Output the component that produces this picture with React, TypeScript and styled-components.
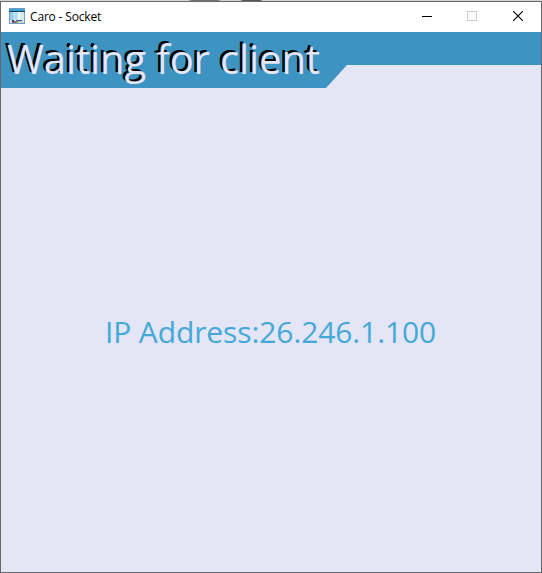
import React from 'react';
import styled, { createGlobalStyle } from 'styled-components';

const GlobalStyle = createGlobalStyle`
  *, *::before, *::after { box-sizing: border-box; }
  body { margin: 0; background: #d4d6d3; overflow: hidden; }
`;

const Desktop = styled.div`
  height: 573px;
  width: 542px;
  padding-top: 1px;
  background: linear-gradient(90deg, #d6d8d5 0 188px, #77716b 192px 218px, #d0d2cf 221px 240px, #555 243px 260px, #d4d6d3 263px);
`;

const Window = styled.main`
  display: flex;
  flex-direction: column;
  width: 542px;
  height: 572px;
  border: 1px solid #68696c;
  background: #e4e5f5;
`;

const TitleBar = styled.header`
  display: flex;
  align-items: flex-start;
  flex: none;
  height: 30px;
  padding-left: 8px;
  background: #fff;
`;

const Caption = styled.span`
  flex: 1;
  margin: 7px 0 0 5px;
  color: #000;
  font: 12px/16px 'Open Sans', sans-serif;
  letter-spacing: -0.17px;
  white-space: nowrap;
`;

const CaptionButton = styled.button<{ $disabled?: boolean }>`
  display: grid;
  place-items: center;
  width: 46px;
  height: 28px;
  padding: 0;
  border: 0;
  background: none;
  color: ${({ $disabled }) => ($disabled ? '#c8c8c8' : '#000')};
`;

const Controls = styled.div`
  display: flex;
`;

const Banner = styled.div`
  flex: none;
  height: 56px;
  padding-left: 6px;
  background: #3d94c3;
  clip-path: polygon(0 0, 100% 0, 100% 33px, 346px 33px, 325px 100%, 0 100%);
`;

const Heading = styled.h1`
  margin: 0;
  color: #e4e5f5;
  font: 400 40px/54px 'Open Sans', sans-serif;
  letter-spacing: -0.12px;
  text-shadow: -2.5px -2px 0 #000;
  white-space: nowrap;
`;

const Body = styled.section`
  display: flex;
  flex: 1;
  justify-content: center;
  padding: 222px 1px 0 0;
`;

const Address = styled.p`
  margin: 0;
  color: #43a9d9;
  font: 400 30px/44px 'Open Sans', sans-serif;
  letter-spacing: -0.1px;
  white-space: nowrap;
`;

const Icon = styled.svg`
  flex: none;
  width: 16px;
  height: 16px;
  margin-top: 6px;
`;

const AppIcon = () => (
  <Icon viewBox="0 0 16 16" shapeRendering="crispEdges">
    <rect width="16" height="16" fill="#6f9dbd" />
    <rect x="1" y="1" width="14" height="2" fill="#3f9fd2" />
    <rect y="3" width="16" height="1" fill="#17415f" />
    <rect x="1" y="4" width="14" height="11" fill="#d5e9f2" />
    <rect x="1" y="4" width="3" height="8" fill="#8fcdea" />
    <rect x="4" y="4" width="5" height="8" fill="#b5dff1" />
    <rect x="9" y="4" width="2" height="8" fill="#f1fafd" />
    <rect x="3" y="12" width="2" height="2" fill="#493451" />
    <rect x="3" y="14" width="2" height="1" fill="#b75a93" />
    <rect x="5" y="13" width="2" height="2" fill="#8b6b83" />
    <rect x="7" y="12" width="2" height="2" fill="#69717d" />
    <rect x="7" y="14" width="3" height="1" fill="#c4a84d" />
    <rect x="9" y="12" width="4" height="1" fill="#3d587b" />
    <rect x="10" y="13" width="3" height="1" fill="#9fb1c4" />
    <rect x="12" y="13" width="2" height="2" fill="#c3c6d6" />
  </Icon>
);

export default function App() {
  return (
    <>
      <GlobalStyle />
      <Desktop>
        <Window>
          <TitleBar>
            <AppIcon />
            <Caption>Caro - Socket</Caption>
            <Controls>
              <CaptionButton aria-label="Minimize">
                <svg width="10" height="10" viewBox="0 0 10 10" shapeRendering="crispEdges" overflow="visible">
                  <rect x="1" y="5" width="10" height="1" fill="currentColor" />
                </svg>
              </CaptionButton>
              <CaptionButton $disabled disabled aria-label="Maximize">
                <svg width="10" height="10" fill="none" stroke="currentColor">
                  <rect x=".5" y=".5" width="9" height="9" />
                </svg>
              </CaptionButton>
              <CaptionButton aria-label="Close">
                <svg width="10" height="10" stroke="currentColor" strokeWidth="1.15">
                  <path d="M0 0 10 10M10 0 0 10" />
                </svg>
              </CaptionButton>
            </Controls>
          </TitleBar>
          <Banner>
            <Heading>Waiting for client</Heading>
          </Banner>
          <Body>
            <Address>IP Address:26.246.1.100</Address>
          </Body>
        </Window>
      </Desktop>
    </>
  );
}
